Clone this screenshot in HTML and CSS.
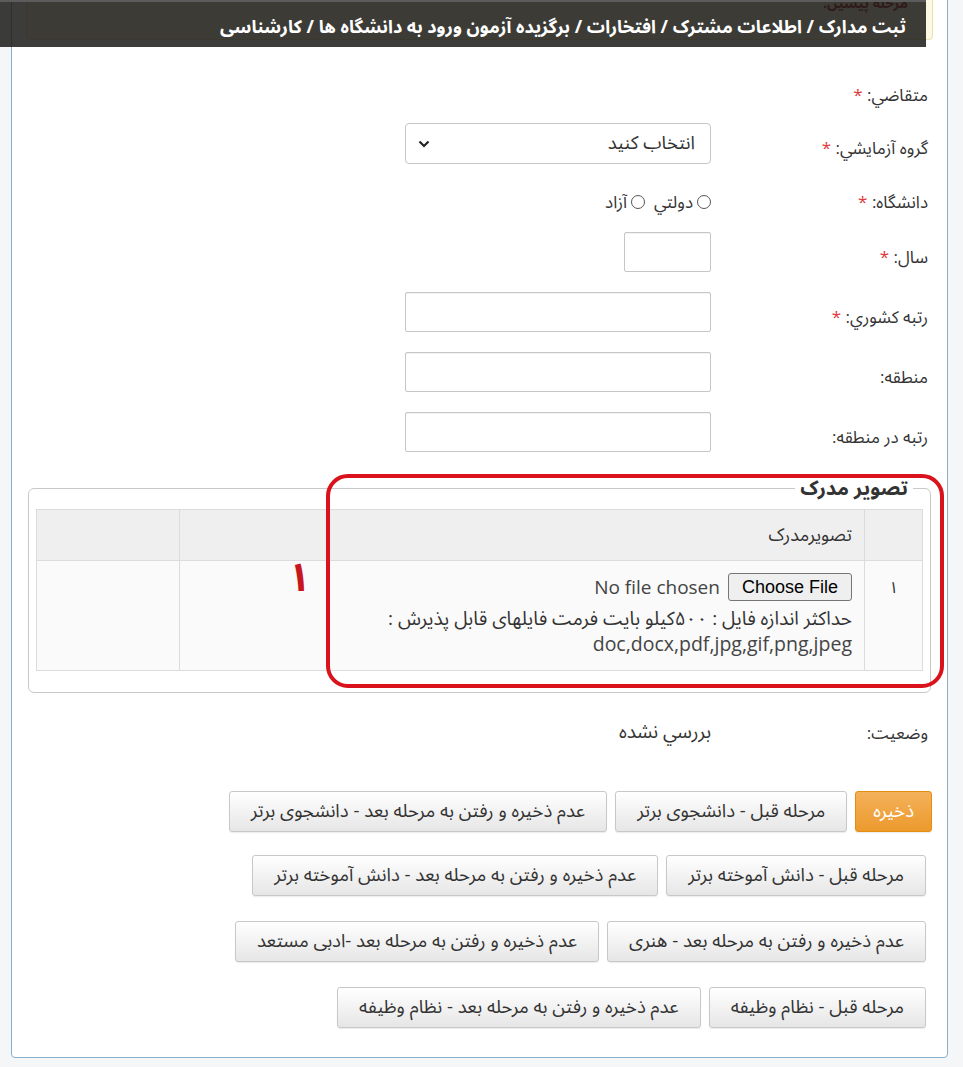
FILE: index.html
```html
<!DOCTYPE html>
<html lang="fa">
<head>
<meta charset="utf-8">
<title>ثبت مدارک</title>
<link rel="stylesheet" href="styles.css">
</head>
<body>
<div class="panel">
  <div class="alert"><strong>مرحله پیشین:</strong></div>
  <div class="form">
    <div class="row r-first"><label class="lbl">متقاضي: <span class="req">*</span></label></div>
    <div class="row r-select">
      <label class="lbl">گروه آزمايشي: <span class="req">*</span></label>
      <div class="select"><span>انتخاب کنید</span><svg width="12" height="8" viewBox="0 0 12 8"><path d="M1.5 1.5 L6 6 L10.5 1.5" fill="none" stroke="#222" stroke-width="2.2"/></svg></div>
    </div>
    <div class="row">
      <label class="lbl">دانشگاه: <span class="req">*</span></label>
      <div class="radios"><span class="radio"></span><span class="opt">دولتي</span><span class="radio"></span><span class="opt">آزاد</span></div>
    </div>
    <div class="row">
      <label class="lbl">سال: <span class="req">*</span></label>
      <input class="input year" type="text">
    </div>
    <div class="row">
      <label class="lbl">رتبه کشوري: <span class="req">*</span></label>
      <input class="input" type="text">
    </div>
    <div class="row">
      <label class="lbl">منطقه:</label>
      <input class="input" type="text">
    </div>
    <div class="row r-last">
      <label class="lbl">رتبه در منطقه:</label>
      <input class="input" type="text">
    </div>

    <fieldset class="docs">
      <legend>تصویر مدرک</legend>
      <table>
        <thead>
          <tr><th class="c-num"></th><th>تصویرمدرک</th><th class="c-end"></th></tr>
        </thead>
        <tbody>
          <tr>
            <td class="c-num">١</td>
            <td>
              <div class="file"><span class="file-btn">Choose File</span><span class="file-name">No file chosen</span></div>
              <div class="desc">حداکثر اندازه فایل : ۵۰۰کیلو بایت فرمت فایلهای قابل پذیرش :<br><span class="ext">doc,docx,pdf,jpg,gif,png,jpeg</span></div>
            </td>
            <td class="c-end"></td>
          </tr>
        </tbody>
      </table>
    </fieldset>

    <div class="row status">
      <label class="lbl lbl-status">وضعیت:</label>
      <div class="status-val">بررسي نشده</div>
    </div>

    <div class="actions">
      <div class="btn-row">
        <button class="btn btn-save">ذخیره</button>
        <button class="btn">مرحله قبل - دانشجوی برتر</button>
        <button class="btn">عدم ذخیره و رفتن به مرحله بعد - دانشجوی برتر</button>
      </div>
      <div class="btn-row">
        <button class="btn">مرحله قبل - دانش آموخته برتر</button>
        <button class="btn">عدم ذخیره و رفتن به مرحله بعد - دانش آموخته برتر</button>
      </div>
      <div class="btn-row">
        <button class="btn">عدم ذخیره و رفتن به مرحله بعد - هنری</button>
        <button class="btn">عدم ذخیره و رفتن به مرحله بعد -ادبی مستعد</button>
      </div>
      <div class="btn-row">
        <button class="btn">مرحله قبل - نظام وظیفه</button>
        <button class="btn">عدم ذخیره و رفتن به مرحله بعد - نظام وظیفه</button>
      </div>
    </div>
  </div>
</div>

<div class="crumb">ثبت مدارک / اطلاعات مشترک / افتخارات / برگزیده آزمون ورود به دانشگاه ها / کارشناسی</div>
<div class="annot-box"></div>
<div class="annot-num">١</div>
</body>
</html>
```

FILE: styles.css
```css
* { box-sizing: border-box; }
html, body { margin: 0; padding: 0; }
body {
  background: #f4f6f8;
  font-family: "Open Sans", "Noto Sans Arabic", "DejaVu Sans", sans-serif;
  color: #333;
  height: 1067px;
  overflow: hidden;
  position: relative;
}
.panel {
  direction: rtl;
  margin: -12px 0 0 11px;
  width: 937px;
  background: #fff;
  border: 1px solid #89afcb;
  border-radius: 0 0 4px 4px;
  padding: 3px 0 29px;
}
.alert {
  margin: 0 14px;
  height: 48px;
  background: #fcf8e3;
  border: 1px solid #f1dfae;
  border-radius: 0 0 4px 4px;
  padding: 2px 24px 0;
  color: #a31515;
  font-size: 14px;
  line-height: 16px;
}
.form { padding: 30px 16px 0; }
.row {
  display: flex;
  align-items: flex-start;
  margin-bottom: 20px;
  padding-right: 3px;
}
.r-first { margin-bottom: 18px; }
.r-select { margin-bottom: 13px; }
.r-last { margin-bottom: 25px; }
.lbl {
  flex: none;
  width: 217px;
  padding-top: 15px;
  line-height: 20px;
  font-size: 17px;
  text-align: right;
}
.req { color: #e0383b; }
.select {
  width: 306px;
  height: 41px;
  border: 1px solid #c6c6c6;
  border-radius: 4px;
  background: #fff;
  display: flex;
  align-items: center;
  justify-content: space-between;
  padding: 0 15px 0 12px;
  font-size: 18.5px;
}
.radios {
  display: flex;
  align-items: center;
  padding-top: 15px;
  line-height: 20px;
  font-size: 17px;
}
.radio {
  width: 14px;
  height: 14px;
  border: 1px solid #555;
  border-radius: 50%;
  background: #fff;
  margin-left: 4px;
}
.opt { margin-left: 9px; }
.input {
  width: 306px;
  height: 40px;
  border: 1px solid #c6c6c6;
  border-radius: 2px;
  background: #fff;
  margin: 0;
  box-shadow: inset 0 1px 1px rgba(0,0,0,.05);
}
.input.year { width: 87px; }

.docs {
  margin: 0;
  border: 1px solid #c9c9c9;
  border-radius: 6px;
  padding: 0 7px 21px;
}
.docs legend {
  font-size: 20px;
  font-weight: bold;
  line-height: 22px;
  padding: 0 5px;
  margin-right: 10px;
  color: #333;
}
.docs table {
  width: 100%;
  border-collapse: collapse;
  table-layout: fixed;
  margin-top: 10px;
}
.docs th {
  background: #efefef;
  height: 51px;
  border: 1px solid #dcdcdc;
  font-weight: normal;
  font-size: 18px;
  text-align: right;
  padding: 0 12px;
}
.docs td {
  background: #fafafa;
  border: 1px solid #dcdcdc;
  height: 110px;
  vertical-align: top;
  padding: 12px 12px 13px;
}
.docs .c-num { width: 58px; text-align: center; }
.docs td.c-num { padding-top: 14px; font-size: 16px; line-height: 24px; }
.docs .c-end { width: 143px; }
.file { display: flex; align-items: center; gap: 8px; }
.file-btn {
  font-family: "Liberation Sans", Arial, sans-serif;
  font-size: 18px;
  height: 28px;
  line-height: 26px;
  padding: 0 13px;
  border: 1px solid #767676;
  border-radius: 3px;
  background: #efefef;
  color: #000;
}
.file-name { font-size: 19px; color: #444; }
.desc { margin-top: 4px; font-size: 19px; line-height: 26px; }
.ext { font-size: 19.5px; color: #444; }

.status { height: 40px; margin: 19px 0 0; }
.lbl-status { padding-top: 11px; }
.status-val { padding-top: 9px; line-height: 20px; font-size: 19px; }

.actions { margin-top: 39px; padding-right: 5px; }
.btn-row { display: flex; gap: 8px; margin-bottom: 25px; }
.btn-row:first-child { margin-bottom: 23px; }
.btn-row:last-child { margin-bottom: 0; }
.btn {
  height: 41px;
  padding: 0 21px;
  font-family: inherit;
  font-size: 18.5px;
  color: #333;
  border: 1px solid #c8c8c8;
  border-radius: 3px;
  background: linear-gradient(#ffffff, #e6e6e6);
  box-shadow: 0 1px 1px rgba(0,0,0,.08);
  white-space: nowrap;
}
.btn-save {
  padding: 0 17px;
  background: linear-gradient(#f4b15b, #ec9a2c);
  border-color: #e38d13;
  color: #fff;
  margin-right: -6px;
}

.crumb {
  position: absolute;
  left: 0;
  top: 0;
  width: 926px;
  height: 47px;
  direction: rtl;
  background: rgba(28,28,26,0.86);
  border-top: 2px solid #5c5c5c;
  color: #fff;
  font-weight: bold;
  font-size: 18px;
  display: flex;
  align-items: center;
  padding: 4px 20px 0;
}
.annot-box {
  position: absolute;
  left: 326px;
  top: 474px;
  width: 618px;
  height: 214px;
  border: 4px solid #d9121b;
  border-radius: 22px;
}
.annot-num {
  position: absolute;
  left: 288px;
  top: 556px;
  font-size: 40px;
  line-height: 40px;
  font-weight: bold;
  color: #c8161d;
}
```
